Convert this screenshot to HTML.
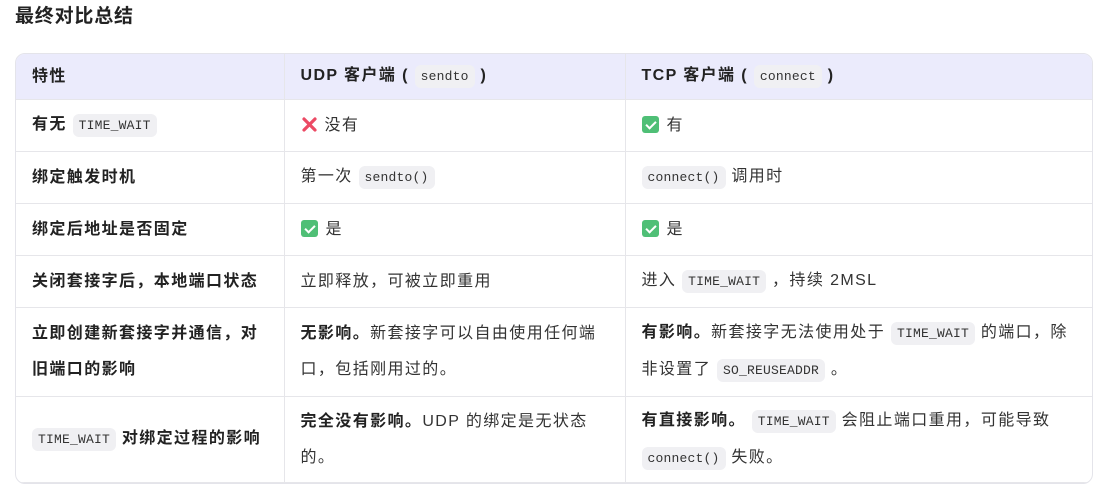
<!DOCTYPE html>
<html><head><meta charset="utf-8"><style>
body{margin:0;background:#fff;width:1093px;height:480px;overflow:hidden;font-family:"Liberation Sans","Noto Sans CJK SC",sans-serif;color:#333;font-size:16px;letter-spacing:1.4px}
h3{position:absolute;left:15px;top:4px;margin:0;font-size:19px;font-weight:bold;color:#222;line-height:26px;letter-spacing:0.8px}
.wrap{position:absolute;left:15px;top:53px;width:1076px;border:1px solid #e4e4ea;border-radius:10px;overflow:hidden}
table{border-collapse:collapse;table-layout:fixed;width:100%}
td,th{border-right:1px solid #e6e6ea;border-bottom:1px solid #e6e6ea;padding:0 16px;text-align:left;vertical-align:middle;line-height:36px}
td:last-child,th:last-child{border-right:none}
th{background:#ebebfc;height:45px;font-weight:bold;color:#222}
td:first-child{font-weight:bold;color:#222}
code{font-family:"Liberation Mono",monospace;font-size:13px;letter-spacing:0.2px;background:#f0f0f3;border-radius:6px;padding:4px 6px;color:#333;font-weight:normal}
b{color:#222}
.x{display:inline-block;vertical-align:-3px;margin-right:7px}
.ck{display:inline-block;width:17px;height:17px;background:#4fbf76;border-radius:3px;vertical-align:-3px;margin-right:8px;position:relative}
.ck:after{content:"";position:absolute;left:6px;top:3px;width:4px;height:8px;border:solid #fff;border-width:0 2px 2px 0;transform:rotate(45deg)}
</style></head><body>
<h3>最终对比总结</h3>
<div class="wrap"><table>
<colgroup><col style="width:268px"><col style="width:341px"><col></colgroup>
<tr><th>特性</th><th>UDP 客户端 ( <code>sendto</code> )</th><th>TCP 客户端 ( <code>connect</code> )</th></tr>
<tr style="height:52px"><td>有无 <code>TIME_WAIT</code></td><td><svg class="x" width="17" height="17" viewBox="0 0 17 17"><path d="M3 3L14 14M14 3L3 14" stroke="#ec4a64" stroke-width="3.2" stroke-linecap="round"/></svg>没有</td><td><span class="ck"></span>有</td></tr>
<tr style="height:52px"><td>绑定触发时机</td><td>第一次 <code>sendto()</code></td><td><code>connect()</code> 调用时</td></tr>
<tr style="height:52px"><td>绑定后地址是否固定</td><td><span class="ck"></span>是</td><td><span class="ck"></span>是</td></tr>
<tr style="height:52px"><td>关闭套接字后，本地端口状态</td><td>立即释放，可被立即重用</td><td>进入 <code>TIME_WAIT</code> ，持续 2MSL</td></tr>
<tr style="height:89px"><td>立即创建新套接字并通信，对<br>旧端口的影响</td><td><b>无影响。</b>新套接字可以自由使用任何端<br>口，包括刚用过的。</td><td><b>有影响。</b>新套接字无法使用处于 <code>TIME_WAIT</code> 的端口，除<br>非设置了 <code>SO_REUSEADDR</code> 。</td></tr>
<tr style="height:86px"><td><code>TIME_WAIT</code> 对绑定过程的影响</td><td><b>完全没有影响。</b>UDP 的绑定是无状态<br>的。</td><td><b>有直接影响。</b> <code>TIME_WAIT</code> 会阻止端口重用，可能导致<br><code>connect()</code> 失败。</td></tr>
</table></div>
</body></html>
